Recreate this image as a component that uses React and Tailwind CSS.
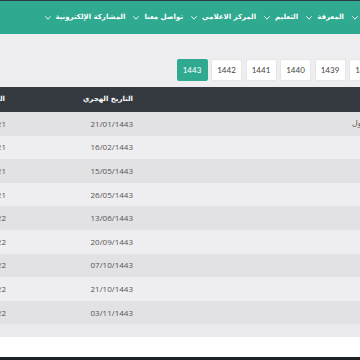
import { Fragment } from 'react';

const navItems = ['عن الوزارة', 'المعرفة', 'التعليم', 'المركز الاعلامي', 'تواصل معنا', 'المشاركة الإلكترونية'];

// السنوات: الأولى في اليمين (مقصوصة)
const years = ['1438', '1439', '1440', '1441', '1442', '1443'];

const rows = [
  { hijri: '21/01/1443', greg: '29/08/2021', title: 'بداية الدراسة للفصل الدراسي الأول' },
  { hijri: '16/02/1443', greg: '23/09/2021' },
  { hijri: '15/05/1443', greg: '19/12/2021' },
  { hijri: '26/05/1443', greg: '30/12/2021' },
  { hijri: '13/06/1443', greg: '16/01/2022' },
  { hijri: '20/09/1443', greg: '21/04/2022' },
  { hijri: '07/10/1443', greg: '08/05/2022' },
  { hijri: '21/10/1443', greg: '22/05/2022' },
  { hijri: '03/11/1443', greg: '02/06/2022' },
];

const Chevron = () => (
  <svg width="6" height="4" viewBox="0 0 6 4" className="shrink-0">
    <path d="M0.6 0.6 L3 3.2 L5.4 0.6" fill="none" stroke="#ffffff" strokeWidth="0.9" strokeLinecap="round" strokeLinejoin="round" />
  </svg>
);

const App = () => {
  return (
    <div dir="rtl" className="w-[360px] h-[360px] overflow-hidden bg-white flex flex-col font-['DejaVu_Sans',sans-serif]">
      <div className="h-[1px] bg-[#2b3940]" />

      {/* القائمة العلوية */}
      <nav className="h-[33px] bg-[#2faa91] overflow-hidden flex items-center">
        <div className="flex items-center gap-[8px] -mr-[53px]">
          {navItems.map((item, i) => (
            <div key={item} className="flex items-center gap-[5px] text-white text-[7px] font-bold whitespace-nowrap">
              <span className={i === 0 ? 'w-[50px] overflow-hidden' : ''}>{item}</span>
              <Chevron />
            </div>
          ))}
        </div>
      </nav>

      {/* أزرار السنوات */}
      <div className="bg-[#eeedf0] pt-[25px] pb-[6px] overflow-hidden">
        <div className="flex gap-[3.5px] -mr-[20px]">
          {years.map((y) => (
            <button
              key={y}
              className={
                y === '1443'
                  ? 'w-[31px] h-[22px] shrink-0 rounded-[2px] bg-[#2faa91] text-white text-[8px] font-["Lato",sans-serif]'
                  : 'w-[31px] h-[22px] shrink-0 rounded-[2px] bg-white border border-[#e6e5e8] text-[#444] text-[8px] font-["Lato",sans-serif]'
              }
            >
              {y}
            </button>
          ))}
        </div>
      </div>

      {/* الجدول */}
      <div className="overflow-hidden">
        <div className="flex h-[25px] bg-[#343a40] text-white text-[7px] font-bold items-center">
          <div className="w-[220px] shrink-0" />
          <div className="w-[130px] shrink-0 pr-[7px] whitespace-nowrap">التاريخ الهجري</div>
          <div className="w-[100px] shrink-0 pr-[5px] whitespace-nowrap">التاريخ الميلادي</div>
        </div>

        {rows.map((r, i) => (
          <Fragment key={r.hijri}>
            <div className={`flex h-[23.6px] items-center text-[#555] text-[8px] ${i % 2 === 0 ? 'bg-[#e2e1e3]' : 'bg-[#eeedef]'}`}>
              <div className="w-[220px] shrink-0 flex justify-end pl-[212px] whitespace-nowrap">
                {r.title && <span>{r.title}</span>}
              </div>
              <div className="w-[130px] shrink-0 pr-[7px] font-['Open_Sans',sans-serif] whitespace-nowrap">{r.hijri}</div>
              <div className="w-[100px] shrink-0 pr-[4px] font-['Open_Sans',sans-serif] whitespace-nowrap">{r.greg}</div>
            </div>
          </Fragment>
        ))}
        <div className="h-[13px] bg-[#ebeaec]" />
      </div>

      <div className="h-[20px] bg-white" />
      <div className="flex-1 bg-[#1f2326]" />
    </div>
  );
};

export default App;
